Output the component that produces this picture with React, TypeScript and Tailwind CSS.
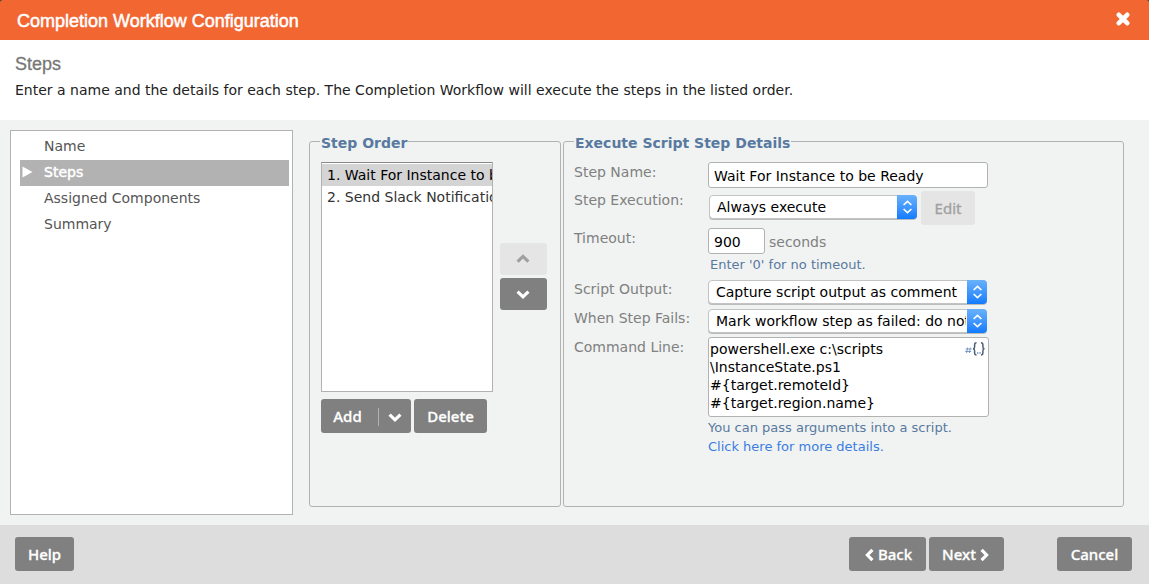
import type { ButtonHTMLAttributes, ReactNode, SelectHTMLAttributes } from "react";

const steps = ["Name", "Steps", "Assigned Components", "Summary"];

type ChevronProps = { points: string; className?: string };

function Chevron({ points, className = "" }: ChevronProps) {
  return (
    <svg width="14" height="14" viewBox="0 0 14 14" aria-hidden="true" className={className}>
      <polyline points={points} fill="none" stroke="currentColor" strokeWidth="3.2" />
    </svg>
  );
}

const UP = "1.6,9.6 7,4.4 12.4,9.6";
const DOWN = "1.6,4.6 7,9.8 12.4,4.6";
const LEFT = "9.4,1.8 4.4,7 9.4,12.2";
const RIGHT = "4.6,1.8 9.6,7 4.6,12.2";

function Button({ className = "", children, ...rest }: ButtonHTMLAttributes<HTMLButtonElement>) {
  return (
    <button
      type="button"
      className={`flex h-[34px] items-center justify-center rounded-[3px] bg-[#808080] pt-px font-['Noto_Sans',sans-serif] text-[15px] font-medium text-white [-webkit-text-stroke:0.3px_white] disabled:bg-[#e5e5e5] disabled:font-normal disabled:text-[#a0a0a0] disabled:[-webkit-text-stroke:0.3px_#a0a0a0] ${className}`}
      {...rest}
    >
      {children}
    </button>
  );
}

function Select({ className = "", children, ...rest }: SelectHTMLAttributes<HTMLSelectElement>) {
  return (
    <div className={`relative h-6 ${className}`}>
      <select
        className="block h-6 w-full appearance-none rounded-[4px] border border-[#c3c3c3] bg-white pr-5 pl-[7px] text-sm leading-5 text-black shadow-[0_1px_0_#bbb]"
        {...rest}
      >
        {children}
      </select>
      <span className="pointer-events-none absolute inset-y-0 right-0 flex w-5 items-center justify-center rounded-r-[4px] bg-linear-to-b from-[#68b1fa] to-[#0f7bff]">
        <svg width="11" height="14" viewBox="0 0 11 14" aria-hidden="true">
          <path d="M1.6 5 5.5 1.4 9.4 5M1.6 9l3.9 3.6L9.4 9" fill="none" stroke="#fff" strokeWidth="1.7" />
        </svg>
      </span>
    </div>
  );
}

function Row({ id, label, children }: { id: string; label: string; children: ReactNode }) {
  return (
    <div className="flex items-start">
      <label htmlFor={id} className="w-[134px] shrink-0 text-sm leading-5 text-[#808080]">
        {label}
      </label>
      <div className="min-w-0">{children}</div>
    </div>
  );
}

const fieldset = "mt-[2px] mb-2 rounded-[3px] border border-[#b2b2b2] px-[10px]";
const legend = "px-px pt-1 text-sm leading-[14px] font-bold text-[#5879a0]";
const textbox = "rounded-[3px] border border-[#b2b2b2] bg-white text-sm text-black";
const listOption = "h-[22px] px-[5px] pt-[3px] pb-0 checked:bg-[#d4d4d4] checked:text-black";

export default function App() {
  return (
    <div className="flex min-h-screen flex-col bg-[#f0f3f2] font-['DejaVu_Sans',sans-serif] text-sm text-[#222]">
      <div className="bg-[#444]">
        <header className="flex h-10 items-center justify-between rounded-t-[3px] bg-[#f26631] pr-[19px] pl-[17px] text-white">
          <h1 className="pt-[2px] font-['Liberation_Sans',sans-serif] text-lg [-webkit-text-stroke:0.5px_white]">
            Completion Workflow Configuration
          </h1>
          <button type="button" aria-label="Close" className="pb-[2px]">
            <svg width="14" height="14" viewBox="0 0 14 14" aria-hidden="true" className="block">
              <path d="M2.8 2.8 11.2 11.2M11.2 2.8 2.8 11.2" stroke="#fff" strokeWidth="4.6" strokeLinecap="round" />
            </svg>
          </button>
        </header>
      </div>

      <section className="h-20 bg-white px-[15px] pt-3">
        <h2 className="font-['Liberation_Sans',sans-serif] text-lg leading-6 text-[#777] [-webkit-text-stroke:0.3px_#777]">
          Steps
        </h2>
        <p className="mt-1 leading-5">
          Enter a name and the details for each step. The Completion Workflow will execute the steps in the listed
          order.
        </p>
      </section>

      <main className="flex flex-1 py-[10px] pr-[25px] pl-[10px]">
        <nav className="mr-4 w-[283px] shrink-0 border border-[#b2b2b2] bg-white pt-[3px] pr-[3px] pl-[9px]">
          <ul>
            {steps.map((step) => {
              const active = step === "Steps";
              return (
                <li key={step}>
                  <a
                    href="#"
                    aria-current={active ? "step" : undefined}
                    className={`flex h-[26px] items-center pb-[2px] ${active ? "bg-[#b2b2b2] text-white [-webkit-text-stroke:0.5px_white]" : "text-[#555]"}`}
                  >
                    <span className="w-6 pl-[2px]">
                      {active && (
                        <svg width="11" height="12" viewBox="0 0 11 12" aria-hidden="true" className="block">
                          <path d="M.5.5 10.5 6 .5 11.5z" fill="#fff" />
                        </svg>
                      )}
                    </span>
                    {step}
                  </a>
                </li>
              );
            })}
          </ul>
        </nav>

        <fieldset className={`mr-[2px] w-[252px] shrink-0 ${fieldset}`}>
          <legend className={legend}>Step Order</legend>
          <div className="mt-3 flex gap-[7px] pl-px">
            <select
              size={10}
              aria-label="Step Order"
              defaultValue="1"
              className="h-[230px] w-[172px] appearance-none overflow-hidden border border-[#b2b2b2] border-t-[#888] bg-white pt-px text-sm text-[#333]"
            >
              <option value="1" className={listOption}>
                1. Wait For Instance to be Ready
              </option>
              <option value="2" className={listOption}>
                2. Send Slack Notification
              </option>
            </select>
            <div className="mt-[81px] flex flex-col gap-[3px]">
              <button
                type="button"
                disabled
                aria-label="Move up"
                className="flex h-8 w-[47px] items-center justify-center rounded-[3px] bg-[#e5e5e5] pr-px text-[#a0a0a0]"
              >
                <Chevron points={UP} />
              </button>
              <button
                type="button"
                aria-label="Move down"
                className="flex h-8 w-[47px] items-center justify-center rounded-[3px] bg-[#808080] pr-px text-white"
              >
                <Chevron points={DOWN} />
              </button>
            </div>
          </div>
          <div className="mt-[7px] flex gap-[3px] pl-px">
            <div className="flex">
              <Button className="w-[57px] rounded-r-none pr-1">Add</Button>
              <Button className="w-[33px] rounded-l-none" aria-label="More add options">
                <span className="flex h-[18px] w-full items-center justify-center border-l border-[#b2b2b2]">
                  <Chevron points={DOWN} />
                </span>
              </Button>
            </div>
            <Button className="w-[73px]">Delete</Button>
          </div>
        </fieldset>

        <fieldset className={`min-w-0 flex-1 ${fieldset}`}>
          <legend className={legend}>Execute Script Step Details</legend>
          <div className="mt-3 flex flex-col">
            <Row id="step-name" label="Step Name:">
              <input
                id="step-name"
                defaultValue="Wait For Instance to be Ready"
                className={`mb-[2px] block h-[26px] w-[280px] px-[5px] pt-px ${textbox}`}
              />
            </Row>
            <Row id="step-execution" label="Step Execution:">
              <div className="flex items-start gap-1 pt-px pb-[3px]">
                <Select id="step-execution" className="mt-1 ml-px w-[208px]">
                  <option>Always execute</option>
                </Select>
                <Button disabled className="w-[54px]">
                  Edit
                </Button>
              </div>
            </Row>
            <Row id="timeout" label="Timeout:">
              <div className="flex items-center">
                <input id="timeout" defaultValue="900" className={`h-[26px] w-[57px] px-[5px] pt-px ${textbox}`} />
                <span className="ml-1 pt-px text-[#808080]">seconds</span>
              </div>
              <p className="pt-px pb-1 pl-[2px] text-[13px] leading-5 text-[#5879a0]">Enter '0' for no timeout.</p>
            </Row>
            <Row id="script-output" label="Script Output:">
              <Select id="script-output" className="mt-px mb-1 w-[279px]">
                <option>Capture script output as comment</option>
              </Select>
            </Row>
            <Row id="step-fails" label="When Step Fails:">
              <Select id="step-fails" className="mt-px mb-1 w-[279px]">
                <option>Mark workflow step as failed: do not continue</option>
              </Select>
            </Row>
            <Row id="command-line" label="Command Line:">
              <div className="relative w-[281px]">
                <textarea
                  id="command-line"
                  defaultValue={
                    "powershell.exe c:\\scripts\n\\InstanceState.ps1\n#{target.remoteId}\n#{target.region.name}"
                  }
                  className={`block h-20 w-full resize-none overflow-hidden px-px pt-[2px] leading-[18px] ${textbox}`}
                />
                <button
                  type="button"
                  aria-label="Insert property"
                  className="absolute top-1 right-1 flex h-4 items-center text-[#4c6078]"
                >
                  <svg width="20" height="14" viewBox="0 0 20 14" aria-hidden="true" fill="none" stroke="currentColor">
                    <path d="M2.6 5.5 1.6 11M5.4 5.5 4.4 11M.6 7h6M.2 9.5h6" stroke="#6f93bd" strokeWidth=".9" />
                    <path
                      d="M11.5.8C9.8.8 9.6 1.4 9.6 3v1.9C9.6 6.2 9.2 6.7 8 6.8c1.2.1 1.6.7 1.6 2v2c0 1.7.2 2.3 1.9 2.3M16 .8c1.7 0 1.9.6 1.9 2.2v1.9c0 1.3.4 1.8 1.6 1.9-1.2.1-1.6.7-1.6 2v2c0 1.7-.2 2.3-1.9 2.3"
                      strokeWidth="1.5"
                    />
                    <path d="M12 11h1.4M14.4 11h1.4" stroke="#6f93bd" strokeWidth="1.4" />
                  </svg>
                </button>
              </div>
              <p className="pt-px text-[13px] leading-[19px] text-[#5879a0]">You can pass arguments into a script.</p>
              <a href="#" className="block text-[13px] leading-[19px] text-[#3b7de0]">
                Click here for more details.
              </a>
            </Row>
          </div>
        </fieldset>
      </main>

      <footer className="flex h-[59px] items-start bg-[#ddd] pt-3 pr-[17px] pl-[15px]">
        <Button className="w-[59px]">Help</Button>
        <div className="mr-[53px] ml-auto flex gap-[3px]">
          <Button className="w-[77px] gap-px">
            <Chevron points={LEFT} />
            Back
          </Button>
          <Button className="w-[75px] gap-px">
            Next
            <Chevron points={RIGHT} />
          </Button>
        </div>
        <Button className="w-[75px]">Cancel</Button>
      </footer>
    </div>
  );
}
